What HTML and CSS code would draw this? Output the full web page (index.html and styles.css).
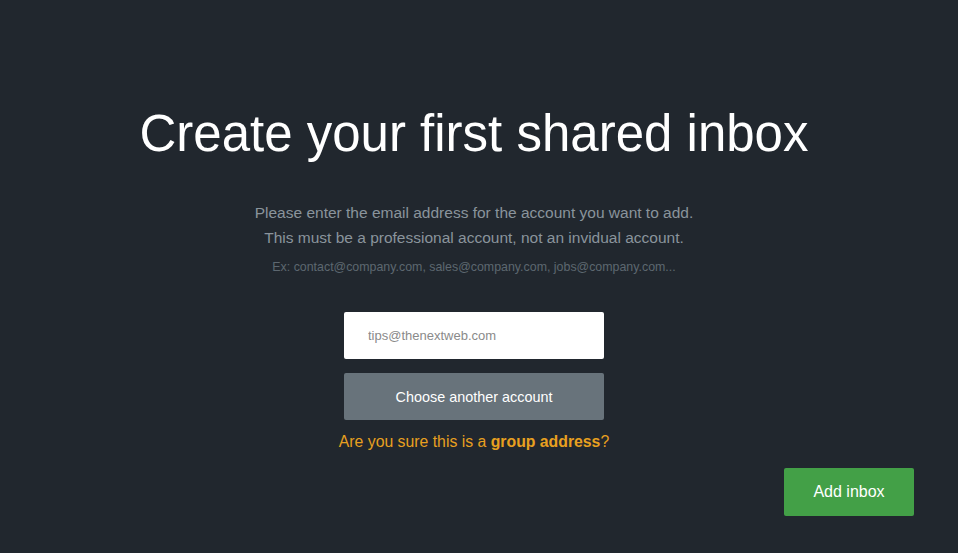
FILE: index.html
```html
<!DOCTYPE html>
<html lang="en">

<head>
    <meta charset="UTF-8">
    <meta name="viewport" content="width=device-width, initial-scale=1.0">
    <title>Create your first shared inbox</title>
    <link rel="stylesheet" href="styles.css">
</head>

<body>
    <div class="page">
        <div class="content">
            <h1 class="title">Create your first shared inbox</h1>
            <p class="intro">Please enter the email address for the account you want to add.<br>
                This must be a professional account, not an invidual account.</p>
            <p class="example">Ex: contact@company.com, sales@company.com, jobs@company.com...</p>

            <!-- adresse et choix du compte -->
            <div class="form">
                <input type="text" class="email" placeholder="tips@thenextweb.com">
                <button class="choose">Choose another account</button>
                <p class="warning">Are you sure this is a <b>group address</b>?</p>
            </div>
        </div>
        <div class="footer">
            <button class="add">Add inbox</button>
        </div>
    </div>
</body>

</html>
```

FILE: styles.css
```css
html,
body {
    margin: 0;
    height: 100%;
}

body {
    font-family: "Liberation Sans", Arial, sans-serif;
    background-color: #21272e;
    color: #ffffff;
}

.page {
    height: 100%;
    display: flex;
    flex-direction: column;
    padding-right: 10px;
    box-sizing: border-box;
}

.content {
    flex: 1;
    display: flex;
    flex-direction: column;
    align-items: center;
    padding-top: 104px;
}

.title {
    font-size: 51px;
    font-weight: normal;
    line-height: 60px;
    margin: 0;
}

.intro {
    font-size: 15.5px;
    line-height: 25px;
    color: #8a949c;
    text-align: center;
    margin: 36px 0 0 0;
}

.example {
    font-size: 12.4px;
    color: #5d6770;
    margin: 10px 0 0 0;
}

.form {
    width: 260px;
    margin-top: 38px;
    display: flex;
    flex-direction: column;
    align-items: center;
}

.email {
    width: 100%;
    height: 47px;
    box-sizing: border-box;
    border: none;
    border-radius: 2px;
    padding: 0 24px;
    font-family: "Liberation Sans", Arial, sans-serif;
    font-size: 13px;
    color: #333;
}

.email::placeholder {
    color: #8a8a8a;
}

.choose {
    width: 100%;
    height: 47px;
    margin-top: 14px;
    border: none;
    border-radius: 2px;
    background-color: #68737b;
    color: #ffffff;
    font-family: "Liberation Sans", Arial, sans-serif;
    font-size: 14.4px;
    cursor: pointer;
}

.warning {
    white-space: nowrap;
    font-size: 15.8px;
    color: #e8a020;
    margin: 13px 0 0 0;
}

.footer {
    display: flex;
    justify-content: flex-end;
    padding: 0 34px 37px 0;
}

.add {
    width: 130px;
    height: 48px;
    border: none;
    border-radius: 2px;
    background-color: #43a047;
    color: #ffffff;
    font-family: "Liberation Sans", Arial, sans-serif;
    font-size: 16px;
    cursor: pointer;
}
```
